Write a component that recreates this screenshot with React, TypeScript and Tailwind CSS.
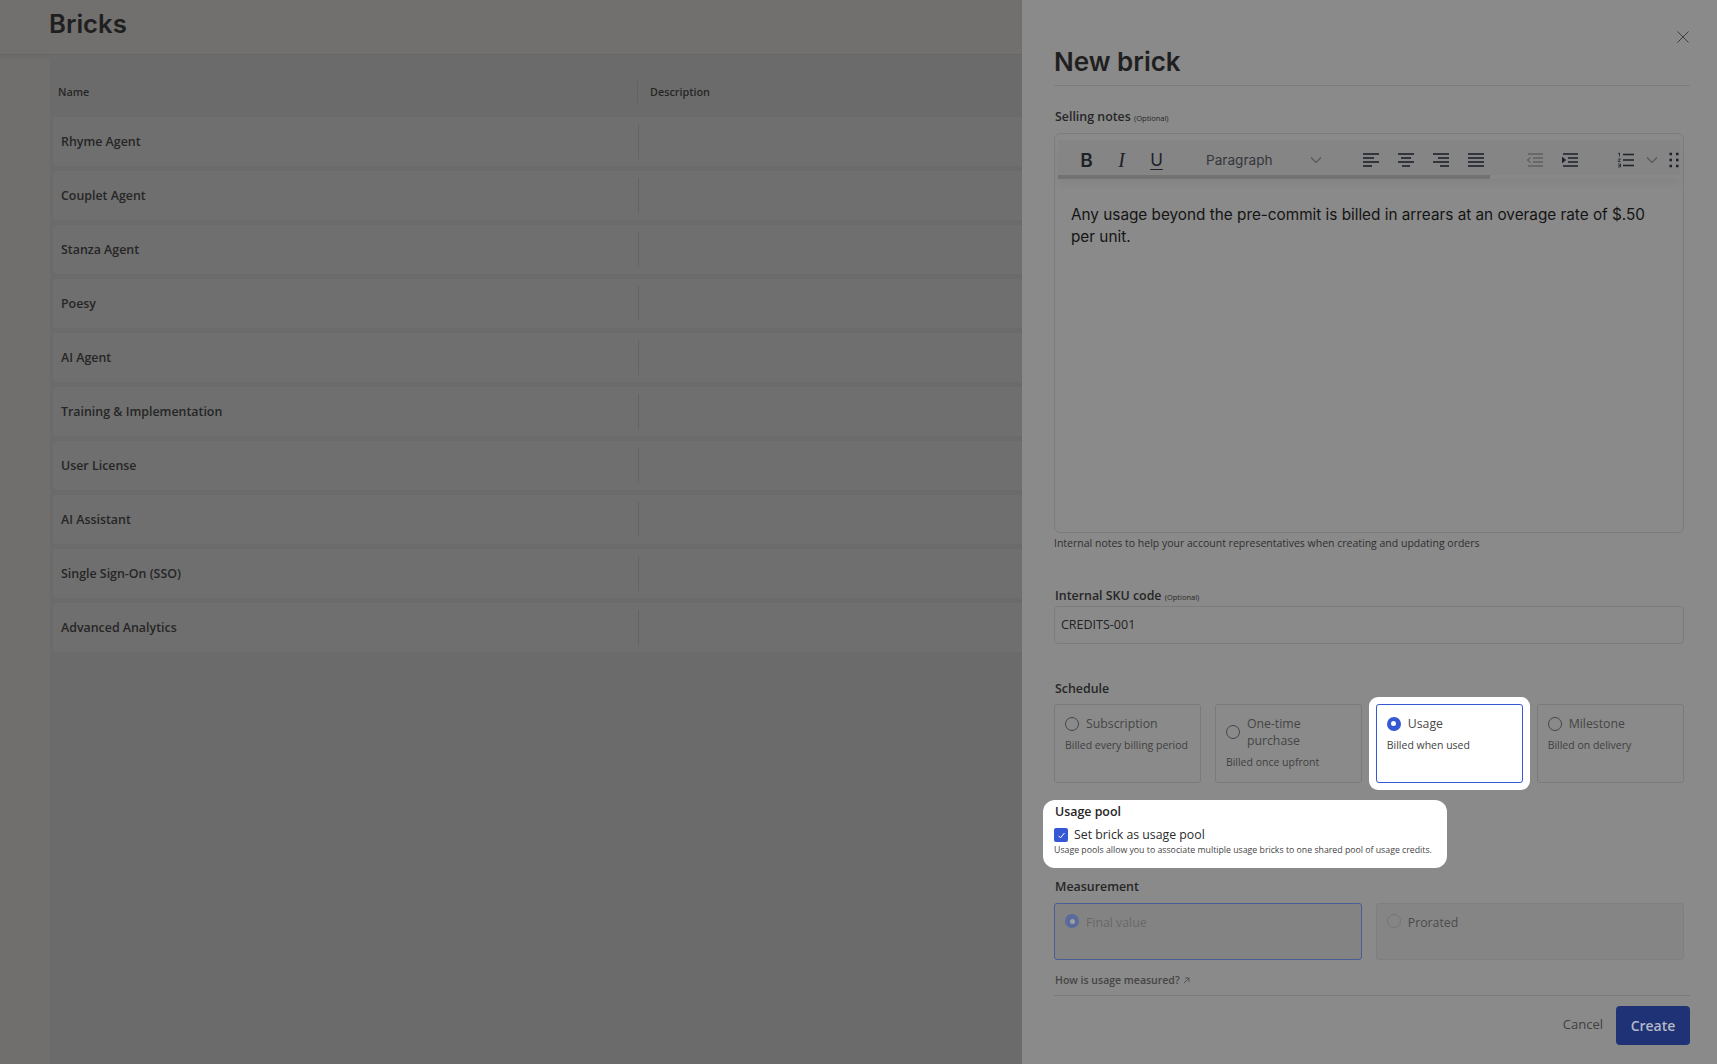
import React from "react";

const sans = "font-['Open_Sans',sans-serif]";
const rows = ["Rhyme Agent","Couplet Agent","Stanza Agent","Poesy","AI Agent","Training & Implementation","User License","AI Assistant","Single Sign-On (SSO)","Advanced Analytics"];

function Lines({ kind }: { kind: "l" | "c" | "r" | "j" }) {
  const s = "#1d2129";
  const m: Record<string, [number, number][]> = {
    l: [[1,17],[1,12],[1,17],[1,10]],
    c: [[1,17],[4,14],[1,17],[5,13]],
    r: [[1,17],[6,17],[1,17],[8,17]],
    j: [[1,17],[1,17],[1,17],[1,17]],
  };
  return (
    <svg width="18" height="16" viewBox="0 0 18 16" className="block shrink-0">
      {m[kind].map(([a, b], i) => <path key={i} d={`M${a} ${2 + i * 4}H${b}`} stroke={s} strokeWidth="1.6" />)}
    </svg>
  );
}

function Indent({ out }: { out?: boolean }) {
  const s = out ? "#5d5f63" : "#1d2129";
  return (
    <svg width="18" height="16" viewBox="0 0 18 16" className="block shrink-0">
      <path d="M2 2H17M7 6H17M7 10H17M2 14H17" stroke={s} strokeWidth="1.6" />
      {out ? <path d="M4.5 5.5L1.5 8L4.5 10.5" stroke={s} strokeWidth="1.2" fill="none" /> : <path d="M1.5 5.5L4.5 8L1.5 10.5Z" fill={s} stroke={s} strokeWidth="1" />}
    </svg>
  );
}

function Chevron() {
  return (
    <svg width="12" height="8" viewBox="0 0 12 8" className="block shrink-0">
      <path d="M1 1.5L6 6.5L11 1.5" stroke="#55585c" strokeWidth="1.2" fill="none" />
    </svg>
  );
}

function Radio({ on, dim }: { on?: boolean; dim?: boolean }) {
  if (on) {
    return (
      <span className={`flex h-[14px] w-[14px] shrink-0 items-center justify-center rounded-full ${dim ? "bg-[#5a6a9c]" : "bg-[#3558d4]"}`}>
        <span className={`h-[5px] w-[5px] rounded-full ${dim ? "bg-[#a0a0a0]" : "bg-white"}`} />
      </span>
    );
  }
  return <span className={`h-[14px] w-[14px] shrink-0 rounded-full border ${dim ? "border-[#757575]" : "border-[#454545]"}`} />;
}

function ScheduleCard({ label, sub }: { label: string; sub: string }) {
  return (
    <div className="h-[79px] rounded-[3px] border border-[#7a7a7a] pl-[10px] pr-2 pt-[10px]">
      <div className="flex items-center gap-[7px]">
        <Radio />
        <span className="text-[12.3px] leading-[17px] text-[#454545]">{label}</span>
      </div>
      <p className="mt-[6px] whitespace-nowrap text-[10.5px] leading-[15px] text-[#3f3f3f]">{sub}</p>
    </div>
  );
}

const label = "block pl-px text-[12.4px] font-semibold leading-[18px] text-[#262626]";

export default function App() {
  return (
    <div className={`flex h-[1064px] w-[1717px] overflow-hidden ${sans}`}>
      <main className="w-[1022px] shrink-0 overflow-hidden bg-[#706f6d]">
        <header className="flex h-[55px] items-center border-b border-[#666664] bg-[#71706e] pb-[7px] pl-[49px] shadow-[0_2px_4px_rgba(0,0,0,0.06)]">
          <h1 className="font-['Inter',sans-serif] text-[25.7px] font-semibold leading-none text-[#1f1f1f]">Bricks</h1>
        </header>
        <div className="ml-[50px] h-[1009px] bg-[#6b6b6b] pt-[15px]">
          <div className="mb-[5px] flex h-[42px] items-center pt-[2px] text-[10.8px] font-semibold text-[#262626]">
            <div className="w-[587px] pl-2">Name</div>
            <div className="flex h-[22px] items-center border-l border-[#626262] pl-3">Description</div>
          </div>
          <div className="flex flex-col gap-[5px]">
            {rows.map((r) => (
              <div key={r} className="ml-[3px] flex h-[49px] items-center rounded-l-[4px] bg-[#6f6f6f]">
                <div className="w-[585px] pl-2 pt-[2px] text-[12.4px] font-semibold text-[#262626]">{r}</div>
                <div className="h-[35px] border-l border-[#636363]" />
              </div>
            ))}
          </div>
        </div>
      </main>

      <aside className="relative w-[695px] min-w-0 shrink-0 bg-[#8a8a8a] pl-[32px] pr-[27px] pt-[45px]">
        <button className="absolute right-[28px] top-[31px] text-[#3f3f3f]">
          <svg width="12" height="12" viewBox="0 0 12 12" className="block"><path d="M0.5 0.5L11.5 11.5M11.5 0.5L0.5 11.5" stroke="currentColor" strokeWidth="1" /></svg>
        </button>
        <h2 className="h-[41px] border-b border-[#7c7c7c] font-['Inter',sans-serif] text-[26px] font-semibold leading-[34px] text-[#1f1f1f]">New brick</h2>

        <div className="pr-[6.5px]">
          <label className={`mt-[22px] ${label}`}>Selling notes <span className="text-[7.5px] font-normal">(Optional)</span></label>
          <div className="mt-[6px] h-[400px] rounded-[6px] border border-[#7c7c7c] px-[3px] pt-[6px]">
            <div className="rounded-t-[3px] bg-[#858585] shadow-[0_6px_6px_rgba(0,0,0,0.04)]">
              <div className="flex h-[35px] items-center overflow-hidden pl-[11px] pt-[5px]">
                <span className="flex w-[35px] shrink-0 justify-center font-['Inter',sans-serif] text-[19px] font-semibold leading-none text-[#1d2129]">B</span>
                <span className="flex w-[35px] shrink-0 justify-center font-['Liberation_Serif',serif] text-[20px] italic leading-none text-[#1d2129]">I</span>
                <span className="flex w-[35px] shrink-0 justify-center font-['Inter',sans-serif] text-[17px] leading-none text-[#1d2129] underline underline-offset-[3px]">U</span>
                <span className="ml-[32px] w-[104px] shrink-0 font-['Inter',sans-serif] text-[13.6px] text-[#33363b]">Paragraph</span>
                <Chevron />
                <div className="ml-[40px] flex gap-[17px]"><Lines kind="l" /><Lines kind="c" /><Lines kind="r" /><Lines kind="j" /></div>
                <div className="ml-[41px] flex gap-[17px]"><Indent out /><Indent /></div>
                <div className="ml-[38px] flex items-center gap-[11px]">
                  <svg width="18" height="16" viewBox="0 0 18 16" className="block shrink-0">
                    <path d="M6 2.5H17M6 8H17M6 13.5H17" stroke="#1d2129" strokeWidth="1.6" />
                    <path d="M1 1.5L2.5 1V4.5M1 7H3.5L1 9.5H3.5M1 12H3.5V15H1M1.5 13.5H3.5" stroke="#1d2129" strokeWidth="0.8" fill="none" />
                  </svg>
                  <Chevron />
                </div>
                <svg width="10" height="16" viewBox="0 0 10 16" className="ml-[11px] block shrink-0">
                  {[2, 8, 14].map((y) => <g key={y}><rect x="0.5" y={y - 1.25} width="2.5" height="2.5" fill="#1d2129" /><rect x="7" y={y - 1.25} width="2.5" height="2.5" fill="#1d2129" /></g>)}
                </svg>
              </div>
              <div className="h-[4px] bg-[#888888]"><div className="h-full w-[432px] bg-[#727272]" /></div>
            </div>
            <p className="mt-[25px] px-[13px] font-['Inter',sans-serif] text-[15.3px] leading-[22px] text-[#141414]">Any usage beyond the pre-commit is billed in arrears at an overage rate of $.50 per unit.</p>
          </div>
          <p className="mt-[2px] text-[10.5px] leading-[16px] text-[#303030]">Internal notes to help your account representatives when creating and updating orders</p>

          <label className={`mt-[36px] ${label}`}>Internal SKU code <span className="text-[7.5px] font-normal">(Optional)</span></label>
          <div className="flex h-[38px] items-center rounded-[4px] border border-[#7c7c7c] pl-[6px] text-[12.5px] text-[#232323]">CREDITS-001</div>

          <label className={`mt-[36px] ${label}`}>Schedule</label>
          <div className="mt-[6px] grid grid-cols-4 gap-[14px]">
            <ScheduleCard label="Subscription" sub="Billed every billing period" />
            <ScheduleCard label="One-time purchase" sub="Billed once upfront" />
            <div className="-m-[7px] rounded-[9px] bg-white p-[7px]">
              <div className="h-[79px] rounded-[3px] border border-[#3558d4] pl-[10px] pt-[10px]">
                <div className="flex items-center gap-[7px]">
                  <Radio on />
                  <span className="text-[12.3px] leading-[17px] text-[#4a4a4a]">Usage</span>
                </div>
                <p className="mt-[6px] text-[10.5px] leading-[15px] text-[#3f3f3f]">Billed when used</p>
              </div>
            </div>
            <ScheduleCard label="Milestone" sub="Billed on delivery" />
          </div>

          <div className="-ml-[11px] mt-[17px] h-[68px] w-[404px] rounded-[12px] bg-white pl-[11px] pt-[3px]">
            <div className={label}>Usage pool</div>
            <div className="mt-[6px] flex items-center gap-[6px]">
              <span className="flex h-[14px] w-[14px] items-center justify-center rounded-[2px] bg-[#3558d4]">
                <svg width="9" height="9" viewBox="0 0 9 9"><path d="M1.5 4.8L3.5 6.8L7.5 2" stroke="white" strokeWidth="1" fill="none" /></svg>
              </span>
              <span className="text-[12.3px] leading-[16px] text-[#2b2b2b]">Set brick as usage pool</span>
            </div>
            <p className="mt-px whitespace-nowrap text-[8.75px] leading-[13px] text-[#444444]">Usage pools allow you to associate multiple usage bricks to one shared pool of usage credits.</p>
          </div>

          <label className={`mt-[10px] ${label}`}>Measurement</label>
          <div className="mt-[7px] grid grid-cols-2 gap-[14px]">
            <div className="flex h-[57px] items-start gap-[7px] rounded-[3px] border border-[#4c5d94] bg-[#838383] pl-[10px] pt-[10px]">
              <Radio on dim />
              <span className="text-[12.3px] leading-[17px] text-[#686868]">Final value</span>
            </div>
            <div className="flex h-[57px] items-start gap-[7px] rounded-[3px] border border-[#7f7f7f] bg-[#858585] pl-[10px] pt-[10px]">
              <Radio dim />
              <span className="text-[12.3px] leading-[17px] text-[#4c4c4c]">Prorated</span>
            </div>
          </div>
          <a className="mt-[13px] flex items-center gap-[3px] pl-px text-[10.5px] font-semibold leading-[15px] text-[#454545]">
            How is usage measured?
            <svg width="7" height="7" viewBox="0 0 7 7"><path d="M1 6L6 1M2 1H6V5" stroke="#454545" strokeWidth="0.8" fill="none" /></svg>
          </a>
        </div>
        <div className="mt-[7px] flex h-[50px] items-start justify-end gap-[13px] border-t border-[#7a7a7a] pt-[10px]">
          <button className="mt-[9px] text-[13px] font-medium leading-[18px] text-[#404040]">Cancel</button>
          <button className="h-[39px] w-[74px] rounded-[4px] bg-[#1f3276] text-[14px] font-semibold text-[#b4b9c6]">Create</button>
        </div>
      </aside>
    </div>
  );
}
